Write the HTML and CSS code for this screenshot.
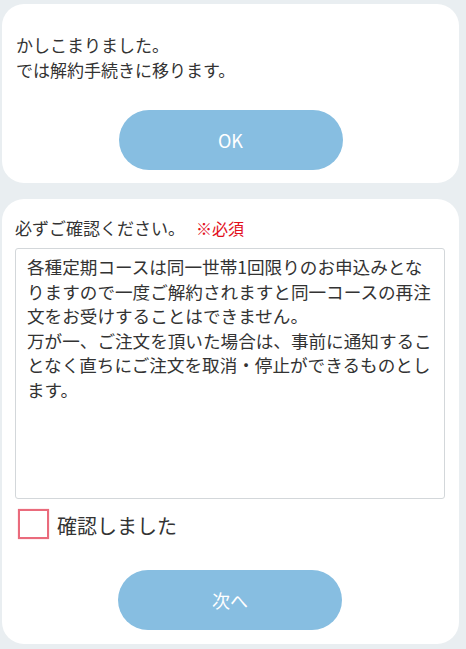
FILE: index.html
```html
<!DOCTYPE html>
<html>
<head>
    <meta charset="utf-8">
    <title>解約手続き</title>
    <link rel="stylesheet" href="styles.css">
</head>
<body>
    <div class="card card-intro">
        <p class="message">かしこまりました。<br>では解約手続きに移ります。</p>
        <div class="btn-row">
            <button class="btn-pill">OK</button>
        </div>
    </div>

    <div class="card card-confirm">
        <p class="label">必ずご確認ください。<span class="required">※必須</span></p>
        <textarea class="notice" readonly>各種定期コースは同一世帯1回限りのお申込みとなりますので一度ご解約されますと同一コースの再注文をお受けすることはできません。
万が一、ご注文を頂いた場合は、事前に通知することなく直ちにご注文を取消・停止ができるものとします。</textarea>
        <label class="check">
            <input type="checkbox">
            <span class="check-box"></span>
            <span class="check-text">確認しました</span>
        </label>
        <div class="btn-row btn-row-next">
            <button class="btn-pill">次へ</button>
        </div>
    </div>
</body>
</html>
```

FILE: styles.css
```css
html { background: #e9eef1; }
body { margin: 0; padding: 4px 7px 6px 2px; font-family: "Noto Sans CJK JP", "Noto Sans", sans-serif; color: #333; }
.card { background: #fff; border-radius: 22px; }
.card-intro { padding: 28px 14px 13px 14px; }
.card-confirm { margin-top: 16px; padding: 17px 14px 14px 13px; }
.message { margin: 0; font-size: 17px; line-height: 25px; }
.btn-row { display: flex; justify-content: center; margin-top: 28px; }
.btn-row-next { margin-top: 31px; }
.btn-pill { width: 224px; height: 60px; border: none; border-radius: 30px; background: #87bee1; color: #fff; font-family: inherit; font-size: 18px; cursor: pointer; }
.label { margin: 0; font-size: 17px; line-height: 24px; }
.required { margin-left: 11px; color: #e2101c; font-size: 16px; }
.notice { display: block; box-sizing: border-box; width: 430px; height: 251px; margin: 8px 0 0 0; padding: 6px 8px 6px 11px; border: 1px solid #d3d7da; border-radius: 3px; resize: none; font-family: inherit; font-size: 17.6px; line-height: 24.5px; color: #333; background: #fff; outline: none; }
.check { display: flex; align-items: center; gap: 8px; margin-top: 10px; margin-left: 3px; cursor: pointer; }
.check input { display: none; }
.check-box { box-sizing: border-box; width: 31px; height: 30px; border: 2px solid #ea6b7c; box-shadow: 0 0 1px #f3a0ab; background: #fff; }
.check-text { font-size: 20px; line-height: 30px; position: relative; top: 2px; }
```
